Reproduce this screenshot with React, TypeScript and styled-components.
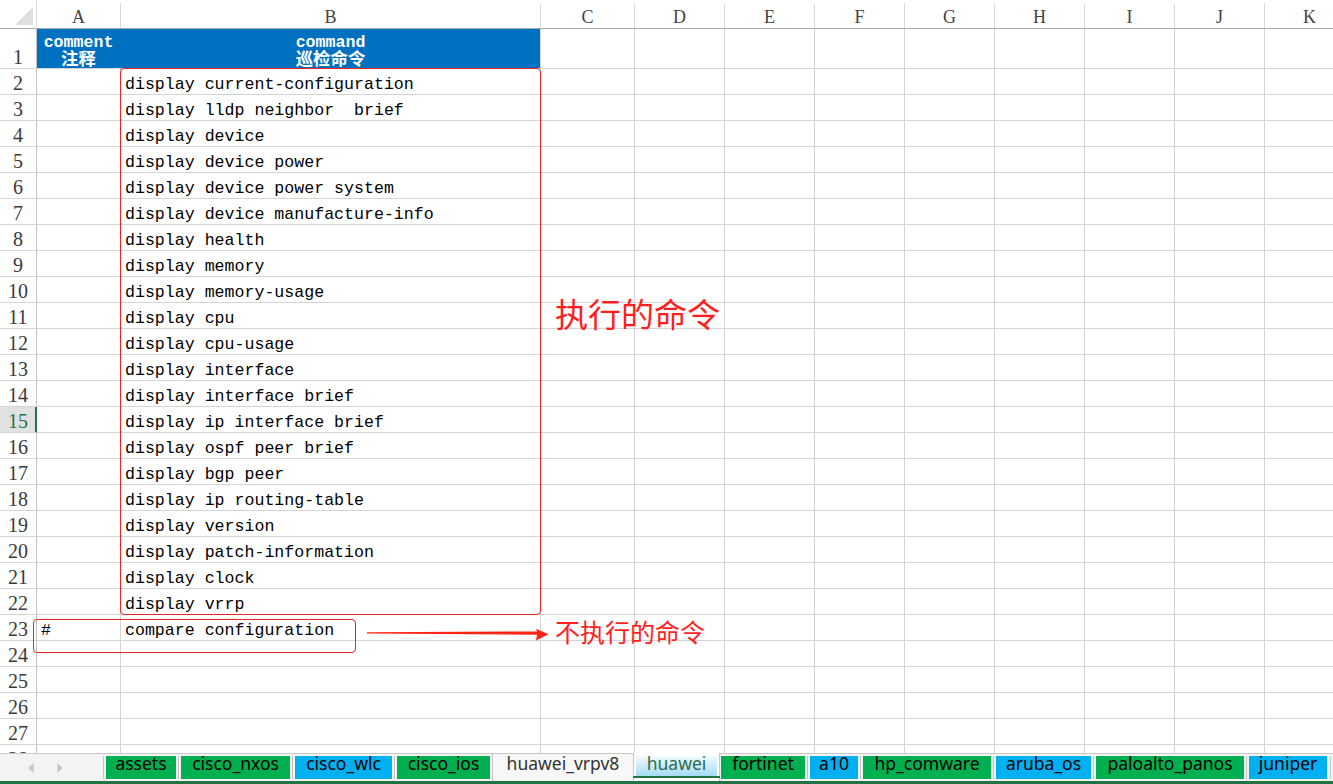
import React from 'react';
import styled, { createGlobalStyle, css } from 'styled-components';

const GlobalStyle = createGlobalStyle`
  html, body { margin: 0; padding: 0; background: #fff; overflow: hidden; }
  body { width: 1333px; height: 784px; }
`;

const COLS = '37px 84px 420px 94px repeat(8, 90px)';
const GRID = '#d4d4d4';
const RED = '#ff1f1f';

const Page = styled.div`
  width: 1333px;
  height: 784px;
  display: flex;
  flex-direction: column;
  overflow: hidden;
  background: #fff;
`;

const Sheet = styled.div`
  position: relative;
  flex: none;
  height: 753px;
  overflow: hidden;
`;

const ColHeaderRow = styled.div`
  display: grid;
  grid-template-columns: ${COLS};
  height: 29px;
  box-sizing: border-box;
  border-bottom: 1px solid #ababab;
`;

const Corner = styled.div`
  box-sizing: border-box;
  border-right: 1px solid #dadada;
  display: flex;
  justify-content: flex-end;
  align-items: flex-end;
  padding: 0 3px 3px 0;
`;

const CornerTriangle = styled.div`
  width: 18px;
  height: 18px;
  background: #dfdfdf;
  clip-path: polygon(100% 0, 100% 100%, 0 100%);
`;

const ColLetter = styled.div`
  box-sizing: border-box;
  border-right: 1px solid #dadada;
  margin-top: 3px;
  display: flex;
  justify-content: center;
  align-items: flex-end;
  padding-bottom: 1px;
  font-family: 'Liberation Serif', serif;
  font-size: 18px;
  line-height: 20px;
  color: #444;
`;

const Row = styled.div<{ $h: number }>`
  display: grid;
  grid-template-columns: ${COLS};
  height: ${(p) => p.$h}px;
`;

const RowNum = styled.div<{ $active?: boolean }>`
  box-sizing: border-box;
  border-right: 1px solid #c4c4c4;
  border-bottom: 1px solid ${GRID};
  display: flex;
  justify-content: center;
  align-items: flex-end;
  padding-bottom: 1px;
  font-family: 'Liberation Serif', serif;
  font-size: 20px;
  line-height: 20px;
  color: #3a3a3a;
  ${(p) =>
    p.$active &&
    css`
      background: #e1e1e1;
      color: #217346;
      border-right-color: #217346;
      box-shadow: inset -1px 0 0 #217346;
    `}
`;

const Cell = styled.div`
  box-sizing: border-box;
  border-right: 1px solid ${GRID};
  border-bottom: 1px solid ${GRID};
  display: flex;
  align-items: flex-end;
  padding: 0 0 0 4px;
  font-family: 'Liberation Mono', 'Noto Sans CJK SC', monospace;
  font-size: 16.6px;
  line-height: 18px;
  color: #000;
  white-space: pre;
  overflow: hidden;
`;

const HeadCell = styled.div<{ $joined?: boolean }>`
  box-sizing: border-box;
  background: #0070c0;
  border-right: 1px solid ${(p) => (p.$joined ? '#0070c0' : GRID)};
  border-bottom: 1px solid ${GRID};
  display: flex;
  flex-direction: column;
  justify-content: flex-end;
  align-items: center;
  font-family: 'Liberation Mono', 'Noto Sans CJK SC', monospace;
  font-weight: bold;
  font-size: 16.6px;
  line-height: 18px;
  color: #fff;
`;

const HeadLine = styled.span<{ $cjk?: boolean }>`
  display: block;
  ${(p) =>
    p.$cjk &&
    css`
      font-size: 17.4px;
      margin-bottom: -2px;
    `}
`;

const RedBox = styled.div<{ $l: number; $t: number; $w: number; $h: number }>`
  position: absolute;
  left: ${(p) => p.$l}px;
  top: ${(p) => p.$t}px;
  width: ${(p) => p.$w}px;
  height: ${(p) => p.$h}px;
  box-sizing: border-box;
  border: 1px solid #ec2424;
  border-radius: 4px;
  pointer-events: none;
`;

const Note = styled.div<{ $l: number; $t: number; $size: number }>`
  position: absolute;
  left: ${(p) => p.$l}px;
  top: ${(p) => p.$t}px;
  font-family: 'Noto Sans CJK SC', sans-serif;
  font-size: ${(p) => p.$size}px;
  line-height: 1;
  color: ${RED};
  white-space: nowrap;
`;

const ArrowSvg = styled.svg`
  position: absolute;
  left: 360px;
  top: 624px;
`;

const TabBar = styled.div`
  flex: none;
  height: 31px;
  box-sizing: border-box;
  border-top: 1px solid #c8c8c8;
  border-bottom: 3px solid #217346;
  background: #f3f3f3;
  display: flex;
  align-items: flex-start;
`;

const Nav = styled.div`
  width: 103px;
  height: 27px;
  display: flex;
  align-items: center;
  gap: 23px;
  padding-left: 28px;
  box-sizing: border-box;
`;

const Divider = styled.div`
  flex: none;
  width: 1px;
  height: 23px;
  margin: 2px 2px 0 0;
  background: #c6c6c6;
`;

const Sep = styled.div`
  flex: none;
  width: 1px;
  height: 23px;
  margin: 2px 2px 0 2px;
  background: #c6c6c6;
`;

const Tab = styled.div<{ $w: number; $bg: string }>`
  flex: none;
  width: ${(p) => p.$w}px;
  height: 23px;
  margin-top: 2px;
  background: ${(p) => p.$bg};
  text-align: center;
  font-family: 'Noto Sans', sans-serif;
  font-size: 17.5px;
  line-height: 14px;
  color: #000;
  white-space: nowrap;
`;

const PlainTab = styled.div<{ $w: number }>`
  flex: none;
  width: ${(p) => p.$w}px;
  height: 28px;
  margin: -1px 0 0 2px;
  box-sizing: border-box;
  border: 1px solid #c6c6c6;
  border-bottom: none;
  background: #f7f7f7;
  padding-top: 2px;
  text-align: center;
  font-family: 'Noto Sans', sans-serif;
  font-size: 17.5px;
  line-height: 14px;
  color: #333;
  white-space: nowrap;
`;

const ActiveTab = styled.div<{ $w: number }>`
  flex: none;
  width: ${(p) => p.$w}px;
  height: 28px;
  margin: -1px 1px 0 -1px;
  box-sizing: border-box;
  border-left: 1px solid #c6c6c6;
  border-right: 1px solid #c6c6c6;
  background: #fff;
  padding: 3px 2px 0 2px;
  display: flex;
  flex-direction: column;
`;

const ActiveLabel = styled.div`
  height: 20px;
  background: linear-gradient(#f2fbfe, #a3dbf5);
  text-align: center;
  font-family: 'Noto Sans', sans-serif;
  font-size: 17.5px;
  line-height: 14px;
  color: #2c6c4c;
  white-space: nowrap;
`;

const ActiveLine = styled.div`
  height: 2px;
  margin: 0 -3px;
  background: #217346;
`;

const EndLine = styled.div`
  flex: none;
  width: 1px;
  height: 23px;
  margin: 2px 0 0 3px;
  background: #c6c6c6;
`;

const letters = ['A', 'B', 'C', 'D', 'E', 'F', 'G', 'H', 'I', 'J', 'K'];

const commands: [string, string][] = [
  ['', 'display current-configuration'],
  ['', 'display lldp neighbor  brief'],
  ['', 'display device'],
  ['', 'display device power'],
  ['', 'display device power system'],
  ['', 'display device manufacture-info'],
  ['', 'display health'],
  ['', 'display memory'],
  ['', 'display memory-usage'],
  ['', 'display cpu'],
  ['', 'display cpu-usage'],
  ['', 'display interface'],
  ['', 'display interface brief'],
  ['', 'display ip interface brief'],
  ['', 'display ospf peer brief'],
  ['', 'display bgp peer'],
  ['', 'display ip routing-table'],
  ['', 'display version'],
  ['', 'display patch-information'],
  ['', 'display clock'],
  ['', 'display vrrp'],
  ['#', 'compare configuration'],
  ['', ''],
  ['', ''],
  ['', ''],
  ['', ''],
  ['', ''],
];

const GREEN = '#00b050';
const BLUE = '#00b0f0';

type TabDef = { name: string; w: number; bg?: string; kind?: 'plain' | 'active' };

const tabs: TabDef[] = [
  { name: 'assets', w: 70, bg: GREEN },
  { name: 'cisco_nxos', w: 109, bg: GREEN },
  { name: 'cisco_wlc', w: 97, bg: BLUE },
  { name: 'cisco_ios', w: 93, bg: GREEN },
  { name: 'huawei_vrpv8', w: 142, kind: 'plain' },
  { name: 'huawei', w: 87, kind: 'active' },
  { name: 'fortinet', w: 84, bg: GREEN },
  { name: 'a10', w: 48, bg: BLUE },
  { name: 'hp_comware', w: 128, bg: GREEN },
  { name: 'aruba_os', w: 95, bg: BLUE },
  { name: 'paloalto_panos', w: 148, bg: GREEN },
  { name: 'juniper', w: 78, bg: BLUE },
];

const NavArrow = ({ dir }: { dir: 'left' | 'right' }) => (
  <svg width="6" height="10" viewBox="0 0 6 10">
    {dir === 'left' ? (
      <polygon points="5.5,0 5.5,10 0.5,5" fill="#c4c4c4" />
    ) : (
      <polygon points="0.5,0 0.5,10 5.5,5" fill="#c4c4c4" />
    )}
  </svg>
);

const EmptyCells = () => (
  <>
    {Array.from({ length: 9 }).map((_, i) => (
      <Cell key={i} />
    ))}
  </>
);

export default function App() {
  const tabNodes: React.ReactNode[] = [];
  tabs.forEach((t, i) => {
    const prev = tabs[i - 1];
    const needSep = i > 0 && !prev.kind && !t.kind;
    if (needSep) tabNodes.push(<Sep key={`s${i}`} />);
    if (t.kind === 'plain') {
      tabNodes.push(
        <PlainTab key={t.name} $w={t.w}>
          {t.name}
        </PlainTab>
      );
    } else if (t.kind === 'active') {
      tabNodes.push(
        <ActiveTab key={t.name} $w={t.w}>
          <ActiveLabel>{t.name}</ActiveLabel>
          <ActiveLine />
        </ActiveTab>
      );
    } else {
      tabNodes.push(
        <Tab key={t.name} $w={t.w} $bg={t.bg || GREEN}>
          {t.name}
        </Tab>
      );
    }
  });

  return (
    <Page>
      <GlobalStyle />
      <Sheet>
        <ColHeaderRow>
          <Corner>
            <CornerTriangle />
          </Corner>
          {letters.map((l) => (
            <ColLetter key={l}>{l}</ColLetter>
          ))}
        </ColHeaderRow>
        <Row $h={40}>
          <RowNum>1</RowNum>
          <HeadCell $joined>
            <HeadLine>comment</HeadLine>
            <HeadLine $cjk>注释</HeadLine>
          </HeadCell>
          <HeadCell>
            <HeadLine>command</HeadLine>
            <HeadLine $cjk>巡检命令</HeadLine>
          </HeadCell>
          <EmptyCells />
        </Row>
        {commands.map(([a, b], i) => {
          const n = i + 2;
          return (
            <Row $h={26} key={n}>
              <RowNum $active={n === 15}>{n}</RowNum>
              <Cell>{a}</Cell>
              <Cell>{b}</Cell>
              <EmptyCells />
            </Row>
          );
        })}
        <RedBox $l={120} $t={68} $w={421} $h={547} />
        <RedBox $l={33} $t={619} $w={323} $h={34} />
        <Note $l={555} $t={297} $size={33}>
          执行的命令
        </Note>
        <Note $l={555} $t={619} $size={25}>
          不执行的命令
        </Note>
        <ArrowSvg width="195" height="20" viewBox="0 0 195 20">
          <polygon
            points="7,8.2 177,7.4 176,4.8 188.5,10.3 176,16.5 177,10.8 7,9.4"
            fill="#ff2414"
          />
        </ArrowSvg>
      </Sheet>
      <TabBar>
        <Nav>
          <NavArrow dir="left" />
          <NavArrow dir="right" />
        </Nav>
        <Divider />
        {tabNodes}
        <EndLine />
      </TabBar>
    </Page>
  );
}
